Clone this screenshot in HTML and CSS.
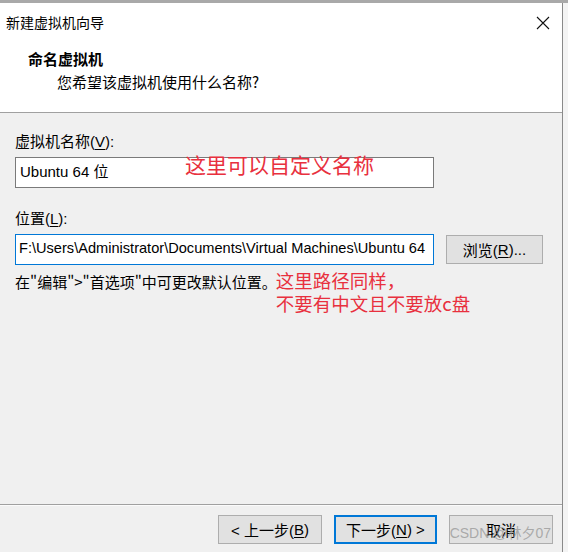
FILE: index.html
```html
<!DOCTYPE html>
<html lang="zh-CN">
<head>
<meta charset="utf-8">
<title>新建虚拟机向导</title>
<link rel="stylesheet" href="styles.css">
</head>
<body>
<div class="screen">
  <div class="topstrip"></div>
  <div class="window">
    <div class="top">
      <div class="titlebar">
        <span class="title">新建虚拟机向导</span>
        <svg class="close" width="14" height="14" viewBox="0 0 14 14"><path d="M1 1 L13 13 M13 1 L1 13" stroke="#111" stroke-width="1.1" fill="none"/></svg>
      </div>
      <div class="header">
        <div class="h1">命名虚拟机</div>
        <div class="h2">您希望该虚拟机使用什么名称?</div>
      </div>
    </div>
    <div class="body">
      <div class="label">虚拟机名称(<u>V</u>):</div>
      <div class="field-row">
        <div class="input">Ubuntu 64 位</div>
        <div class="note note1">这里可以自定义名称</div>
      </div>
      <div class="label label2">位置(<u>L</u>):</div>
      <div class="loc-row">
        <div class="input focus">F:\Users\Administrator\Documents\Virtual Machines\Ubuntu 64</div>
        <div class="btn browse">浏览(<u>R</u>)...</div>
      </div>
      <div class="hint-row">
        <span class="hint">在"编辑"&gt;"首选项"中可更改默认位置。</span>
        <span class="note note2">这里路径同样，<br>不要有中文且不要放c盘</span>
      </div>
    </div>
    <div class="footer">
      <div class="btn">&lt; 上一步(<u>B</u>)</div>
      <div class="btn primary">下一步(<u>N</u>) &gt;</div>
      <div class="btn cancel">取消<span class="watermark">CSDN @林夕07</span></div>
    </div>
  </div>
</div>
</body>
</html>
```
FILE: styles.css
```css
html, body {
  margin: 0;
  padding: 0;
}
body {
  width: 568px;
  height: 552px;
  overflow: hidden;
  background: #f4f4f4;
  font-family: "Liberation Sans", "Noto Sans CJK SC", sans-serif;
  color: #000;
}
.screen {
  width: 568px;
  height: 552px;
  display: flex;
  flex-direction: column;
}
.topstrip {
  height: 3px;
  background: #a9a9a9;
  flex: none;
}
.window {
  width: 562px;
  flex: 1;
  background: #f0f0f0;
  border-right: 1px solid #8a8a8a;
  display: flex;
  flex-direction: column;
}
.top {
  background: #fff;
  height: 109px;
  border-bottom: 1px solid #a0a0a0;
  flex: none;
}
.titlebar {
  height: 38px;
  display: flex;
  align-items: center;
  justify-content: space-between;
  padding: 0 12px 0 6px;
  box-sizing: border-box;
}
.title {
  font-family: "Noto Sans CJK SC", sans-serif;
  font-size: 14px;
}
.close {
  margin-top: 1px;
}
.header {
  padding-left: 28px;
  padding-top: 8px;
}
.h1 {
  font-family: "Noto Sans CJK SC", sans-serif;
  font-weight: bold;
  font-size: 15px;
  line-height: 20px;
}
.h2 {
  font-family: "Noto Sans CJK SC", sans-serif;
  font-size: 15px;
  line-height: 22px;
  padding-left: 29px;
  margin-top: 2px;
}
.body {
  flex: 1;
  padding: 18px 0 0 15px;
  box-sizing: border-box;
}
.label {
  font-size: 15px;
  line-height: 22px;
  height: 22px;
}
.label u, .btn u {
  text-decoration-thickness: 1px;
  text-underline-offset: 2px;
}
.field-row {
  margin-top: 4px;
  position: relative;
}
.input {
  width: 419px;
  height: 31px;
  box-sizing: border-box;
  border: 1px solid #7a7a7a;
  background: #fff;
  font-size: 15px;
  line-height: 27px;
  padding-left: 4px;
  white-space: nowrap;
  overflow: hidden;
}
.input.focus {
  border-color: #0078d7;
  padding-left: 3px;
  font-size: 14.6px;
}
.note {
  font-family: "Noto Sans CJK SC", sans-serif;
  color: #e8303e;
  font-size: 21px;
  line-height: 23px;
}
.note1 {
  position: absolute;
  left: 170px;
  top: -4px;
}
.label2 {
  margin-top: 20px;
}
.loc-row {
  margin-top: 4px;
  display: flex;
  align-items: center;
  gap: 12px;
}
.btn {
  height: 29px;
  box-sizing: border-box;
  border: 1px solid #adadad;
  background: #e1e1e1;
  font-size: 15px;
  display: flex;
  align-items: center;
  justify-content: center;
  position: relative;
}
.browse {
  width: 97px;
}
.hint-row {
  display: flex;
  align-items: flex-start;
  margin-top: 4px;
}
.hint {
  font-family: "Noto Sans CJK SC", sans-serif;
  font-size: 15px;
  line-height: 22px;
  margin-top: 2px;
}
.note2 {
  margin-left: -1px;
  font-size: 18.5px;
  line-height: 23px;
}
.footer {
  flex: none;
  height: 48px;
  border-top: 1px solid #a0a0a0;
  box-shadow: inset 0 1px 0 #fbfbfb;
  display: flex;
  justify-content: flex-end;
  align-items: flex-start;
  padding: 10px 9px 0 0;
  box-sizing: border-box;
  gap: 12px;
}
.footer .btn {
  width: 104px;
}
.footer .primary {
  width: 103px;
  border: 2px solid #0078d7;
}
.cancel {
  color: #000;
}
.watermark {
  position: absolute;
  right: 1px;
  bottom: 1px;
  font-size: 14px;
  color: rgba(150, 150, 150, 0.75);
  font-family: "Liberation Sans", "Noto Sans CJK SC", sans-serif;
  white-space: nowrap;
}
```
